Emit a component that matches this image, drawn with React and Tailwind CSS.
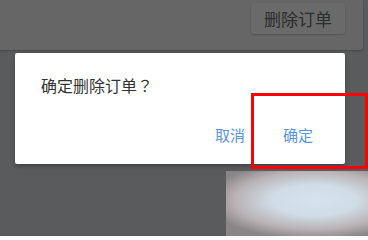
export default function App() {
  const font = { fontFamily: '"Noto Sans CJK SC", "Noto Sans", sans-serif' };
  return (
    <div className="relative w-[368px] h-[236px] overflow-hidden bg-[#5a5b5d]" style={font}>
      <div className="w-[363px] h-[50px] bg-[#666666] rounded-br-[3px] shadow-[0_1px_2px_rgba(0,0,0,0.25)] flex justify-end items-start pt-[3px] pr-[18px]">
        <div className="w-[94px] h-[31px] bg-[#6a6a6a] rounded-[3px] shadow-[0_1px_2px_rgba(0,0,0,0.2)] flex items-center justify-center text-[17px] text-[#2d2d2d] leading-none">
          删除订单
        </div>
      </div>
      <div className="ml-[15px] mt-[3px] w-[330px] h-[111px] bg-white rounded-[2px] shadow-[0_2px_4px_rgba(0,0,0,0.3)] flex flex-col">
        <div className="pl-[26px] pt-[23px] text-[16px] leading-[18px] text-[#333333] [font-family:'Noto_Sans_CJK_TC','Noto_Sans_CJK_SC',sans-serif]">确定删除订单？</div>
        <div className="flex justify-end items-center mt-[32px] pr-[32px] gap-[38px] text-[15px] leading-[18px] text-[#5a93de]">
          <span>取消</span>
          <span>确定</span>
        </div>
      </div>
      <div className="absolute left-[251px] top-[93px] w-[117px] h-[76px] border-[3px] border-[#ff0000]" />
      <div className="absolute left-[226px] top-[171px] w-[142px] h-[65px] bg-[radial-gradient(ellipse_75%_60%_at_62%_45%,#d5e3ee_0%,#d0dce6_40%,#b9b2b4_75%,#8a8587_100%)]" />
    </div>
  );
}
